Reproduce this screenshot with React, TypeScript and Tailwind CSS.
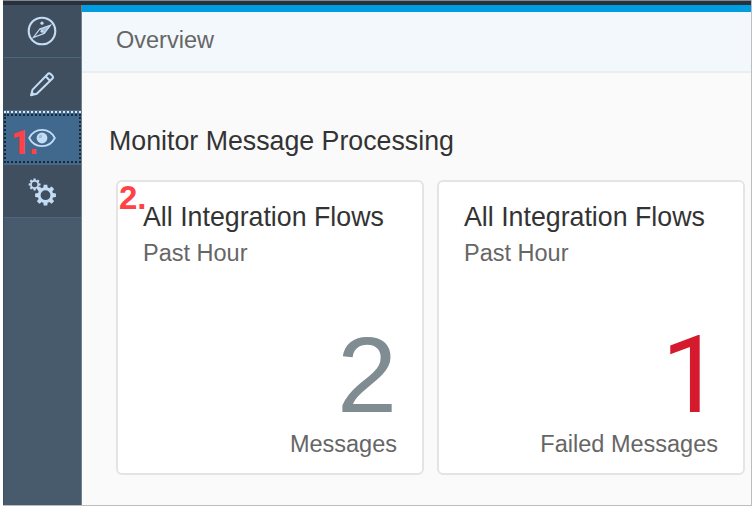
import type { ReactNode } from "react";

function NavItem({ active = false, children }: { active?: boolean; children: ReactNode }) {
  if (active) {
    return (
      <div className="h-[54px] border-t-2 border-b border-t-[#dfe8f0] border-b-[#4c6880] bg-[#41698d] pt-px [border-top-style:dotted]">
        <div className="flex h-[49px] items-center justify-center border-2 border-dotted border-[#172738] pr-0.5 pb-px">
          {children}
        </div>
      </div>
    );
  }
  return (
    <div className="flex h-[53px] items-center justify-center border-b border-[#4c6880] bg-[#3f4f5f] pr-0.5">
      {children}
    </div>
  );
}

function Compass() {
  return (
    <svg width="30" height="30" viewBox="0 0 30 30" fill="none" stroke="#c4ddf5">
      <circle cx="15" cy="15" r="13.3" strokeWidth="2.1" />
      <path d="M23.6 9.2 17.2 17.4 6.4 21.5 12.8 13Z" strokeWidth="1.2" />
      <path d="M23.6 9.2 17.2 17.4 12.8 13Z" fill="#c4ddf5" fillOpacity=".75" strokeWidth=".5" />
      <circle cx="15" cy="15.2" r="1.5" fill="#c4ddf5" stroke="none" />
      <circle cx="15" cy="7.2" r="1.6" fill="#c4ddf5" stroke="none" />
    </svg>
  );
}

function Pencil() {
  return (
    <svg width="26" height="26" viewBox="0 0 26 26" fill="none" stroke="#c4ddf5" strokeWidth="2" strokeLinejoin="round">
      <path d="M2 24.2 3.6 18.6 18.6 3.2Q20 1.6 21.6 3L23.4 4.8Q24.7 6.3 23.2 7.8L7.8 22.8Z" />
      <path d="M16.6 5.3 21 9.8" />
      <path d="m1.5 24.8 1.4-4.8 3.4 3.4Z" fill="#c4ddf5" stroke="none" />
    </svg>
  );
}

function Eye() {
  return (
    <svg width="28" height="20" viewBox="0 0 28 20" fill="none" stroke="#c4ddf5">
      <path d="M1.2 10C4 4.4 8.6 1.9 14 1.9S24 4.4 26.8 10C24 15.6 19.4 18.1 14 18.1S4 15.6 1.2 10Z" strokeWidth="1.8" />
      <circle cx="14" cy="10" r="5.4" fill="#c4ddf5" stroke="none" />
      <path d="M14 6.6V10H10.8A3.3 3.3 0 0 1 14 6.6Z" fill="#9dbddb" stroke="none" />
    </svg>
  );
}

function Gear({ x, y, scale }: { x: number; y: number; scale: number }) {
  return (
    <g transform={`translate(${x} ${y}) scale(${scale})`}>
      <circle r="6.5" fill="none" stroke="#c4ddf5" strokeWidth="3" />
      {[0, 45, 90, 135, 180, 225, 270, 315].map((angle) => (
        <path key={angle} d="M-2.3-7.2-1.8-10.6H1.8L2.3-7.2Z" fill="#c4ddf5" transform={`rotate(${angle})`} />
      ))}
    </g>
  );
}

function Gears() {
  return (
    <svg className="mt-0.5" width="28" height="28" viewBox="0 0 28 28">
      <Gear x={6.6} y={6.5} scale={0.56} />
      <Gear x={17.5} y={17.2} scale={0.98} />
    </svg>
  );
}

function Tile({ label, children }: { label: string; children: ReactNode }) {
  return (
    <section className="h-[295px] w-[308px] shrink-0 rounded-[6px] border-2 border-[#e4e4e4] bg-white px-[25px] pt-[19px]">
      <h3 className="text-[26.75px] leading-8 whitespace-nowrap text-[#333]">All Integration Flows</h3>
      <p className="mt-[6px] text-[23.5px] leading-7 text-[#666]">Past Hour</p>
      <div className="mt-[54px] h-[107px] text-right text-[108px] leading-[107px]">{children}</div>
      <p className="mt-[2px] text-right text-[23.5px] leading-7 whitespace-nowrap text-[#666]">{label}</p>
    </section>
  );
}

export default function App() {
  return (
    <div className="relative h-[506px] w-[753px] overflow-hidden bg-white pl-[3px] font-['Liberation_Sans',Arial,sans-serif]">
      <div className="flex h-[506px] w-[749px] flex-col border-r border-b border-[#bdbdbd]">
        <div className="h-[5px] shrink-0 border-t border-[#85888c] bg-[#28323e]" />
        <div className="flex min-h-0 flex-1">
          <nav className="w-[79px] shrink-0 border-r border-l border-r-[#71808e] border-l-[#3b5065] bg-[#475b6c]">
            <NavItem><Compass /></NavItem>
            <NavItem><Pencil /></NavItem>
            <NavItem active><Eye /></NavItem>
            <NavItem><Gears /></NavItem>
          </nav>
          <main className="min-w-0 flex-1 bg-[#fafafa]">
            <div className="h-[7px] bg-[#009de0]" />
            <header className="h-[61px] border-b-2 border-[#e9eeee] bg-[#f2f8fc] pt-[13px] pl-[34px]">
              <h1 className="text-[23.5px] leading-[30px] text-[#666]">Overview</h1>
            </header>
            <h2 className="mt-[52px] ml-[27px] text-[26.75px] leading-8 text-[#333]">Monitor Message Processing</h2>
            <div className="mt-[23px] ml-[34px] flex gap-[13px]">
              <Tile label="Messages">
                <span className="text-[#7f8c92]">2</span>
              </Tile>
              <Tile label="Failed Messages">
                <span className="-mr-1 font-['Roboto',sans-serif] text-[#d61a2e]">1</span>
              </Tile>
            </div>
          </main>
        </div>
      </div>
      <span className="absolute top-[125px] left-[11px] text-[33px] leading-9 font-bold text-[#ff4248]">
        <span className="inline-block w-[18px] font-['Roboto',sans-serif] font-black">1</span>.
      </span>
      <span className="absolute top-[180px] left-[119px] text-[33px] leading-9 font-bold text-[#ff4248]">2.</span>
    </div>
  );
}
